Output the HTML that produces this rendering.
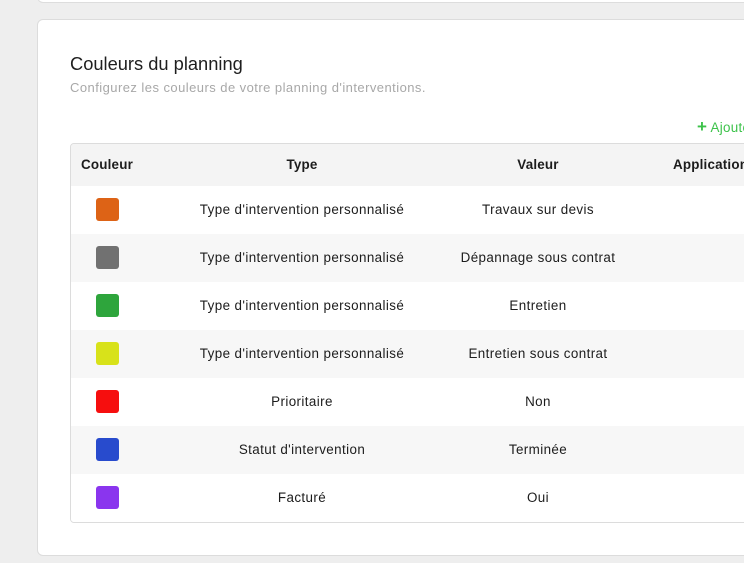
<!DOCTYPE html>
<html><head><meta charset="utf-8"><style>
body{margin:0;width:744px;height:563px;background:#eeeeee;font-family:"Liberation Sans",sans-serif;overflow:hidden;position:relative;color:#222}
.top{position:absolute;left:37px;top:-10px;width:720px;height:11px;background:#fff;border:1px solid #ddd;border-radius:6px}
.card{position:absolute;left:37px;top:19px;width:730px;height:535px;background:#fff;border:1px solid #dcdcdc;border-radius:6px}
.t{position:absolute;white-space:nowrap}
.tbl{position:absolute;left:70px;top:143px;width:700px;height:378px;border:1px solid #dcdcdc;border-radius:4px;overflow:hidden}
.row{position:absolute;left:0;width:700px;height:48px}
.sw{position:absolute;left:25px;top:12px;width:23px;height:23px;border-radius:3px}
.c{position:absolute;top:0;line-height:48px;font-size:13.4px;letter-spacing:0.4px;transform:translateX(-50%);white-space:nowrap;color:#1c1c1c}
.h{font-size:13.4px;font-weight:bold;letter-spacing:0.2px;line-height:42px}
</style></head><body>
<div class="top"></div>
<div class="card"></div>
<div class="t" style="left:70px;top:53px;font-size:18.3px;color:#1e1e1e">Couleurs du planning</div>
<div class="t" style="left:70px;top:80px;font-size:13px;letter-spacing:0.45px;color:#a8a8a8">Configurez les couleurs de votre planning d'interventions.</div>
<div class="t" style="left:697px;top:117px;font-size:13.4px;letter-spacing:0.3px;color:#3cc24a"><span style="font-size:17px;font-weight:bold">+</span> Ajouter</div>
<div class="tbl">
<div class="row" style="top:0;height:42px;background:#f4f4f4">
<div class="c h" style="left:36px;line-height:42px">Couleur</div>
<div class="c h" style="left:231px;line-height:42px">Type</div>
<div class="c h" style="left:467px;line-height:42px">Valeur</div>
<div class="c h" style="left:602px;transform:none;line-height:42px">Application</div>
</div>
<div class="row" style="top:42px;background:#fff"><div class="sw" style="background:#dd6316"></div><div class="c" style="left:231px">Type d'intervention personnalisé</div><div class="c" style="left:467px">Travaux sur devis</div></div>
<div class="row" style="top:90px;background:#f7f7f7"><div class="sw" style="background:#717171"></div><div class="c" style="left:231px">Type d'intervention personnalisé</div><div class="c" style="left:467px">Dépannage sous contrat</div></div>
<div class="row" style="top:138px;background:#fff"><div class="sw" style="background:#2ea53c"></div><div class="c" style="left:231px">Type d'intervention personnalisé</div><div class="c" style="left:467px">Entretien</div></div>
<div class="row" style="top:186px;background:#f7f7f7"><div class="sw" style="background:#d8e21a"></div><div class="c" style="left:231px">Type d'intervention personnalisé</div><div class="c" style="left:467px">Entretien sous contrat</div></div>
<div class="row" style="top:234px;background:#fff"><div class="sw" style="background:#f60e0e"></div><div class="c" style="left:231px">Prioritaire</div><div class="c" style="left:467px">Non</div></div>
<div class="row" style="top:282px;background:#f7f7f7"><div class="sw" style="background:#284bcd"></div><div class="c" style="left:231px">Statut d'intervention</div><div class="c" style="left:467px">Terminée</div></div>
<div class="row" style="top:330px;background:#fff"><div class="sw" style="background:#8a35ee"></div><div class="c" style="left:231px">Facturé</div><div class="c" style="left:467px">Oui</div></div>
</div>
</body></html>
